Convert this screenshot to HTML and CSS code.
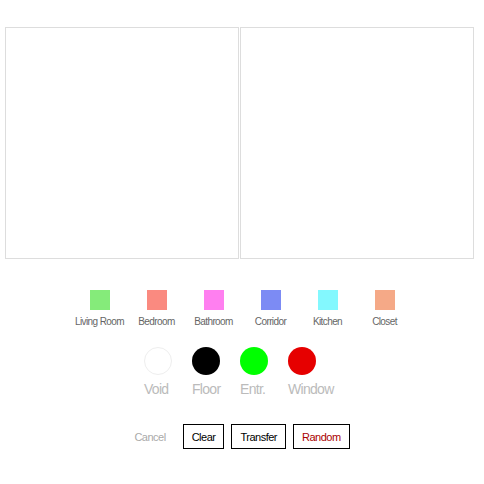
FILE: index.html
```html
<!DOCTYPE html>
<html>
<head>
    <title>Floor Plan Editor</title>
    <link rel="stylesheet" href="styles.css">
</head>
<body>
    <div class="canvases">
        <div class="canvas"></div>
        <div class="canvas"></div>
    </div>

    <div class="rooms">
        <div class="room"><span class="swatch living"></span><span class="room-label">Living Room</span></div>
        <div class="room"><span class="swatch bedroom"></span><span class="room-label">Bedroom</span></div>
        <div class="room"><span class="swatch bathroom"></span><span class="room-label">Bathroom</span></div>
        <div class="room"><span class="swatch corridor"></span><span class="room-label">Corridor</span></div>
        <div class="room"><span class="swatch kitchen"></span><span class="room-label">Kitchen</span></div>
        <div class="room"><span class="swatch closet"></span><span class="room-label">Closet</span></div>
    </div>

    <div class="tiles">
        <div class="tile"><span class="dot void"></span><span class="tile-label">Void</span></div>
        <div class="tile"><span class="dot floor"></span><span class="tile-label">Floor</span></div>
        <div class="tile"><span class="dot entrance"></span><span class="tile-label">Entr.</span></div>
        <div class="tile"><span class="dot window"></span><span class="tile-label">Window</span></div>
    </div>

    <div class="actions">
        <span class="cancel">Cancel</span>
        <button class="btn">Clear</button>
        <button class="btn">Transfer</button>
        <button class="btn random">Random</button>
    </div>
</body>
</html>
```

FILE: styles.css
```css
body {
    margin: 0;
    background-color: #fff;
    font-family: "Liberation Sans", sans-serif;
}
.canvases {
    display: flex;
    gap: 1px;
    padding: 27px 0 0 5px;
}
.canvas {
    width: 232px;
    height: 230px;
    border: 1px solid #ddd;
}
.rooms {
    display: flex;
    justify-content: center;
    margin-top: 31px;
}
.room {
    width: 57px;
    display: flex;
    flex-direction: column;
    align-items: center;
}
.swatch {
    width: 20px;
    height: 20px;
}
.room-label {
    margin-top: 6px;
    font-size: 10px;
    letter-spacing: -0.6px;
    color: #666;
    white-space: nowrap;
}
.living { background-color: #85eb7a; }
.bedroom { background-color: #fa8a80; }
.bathroom { background-color: #ff7ff0; }
.corridor { background-color: #7c8bf4; }
.kitchen { background-color: #83f8fe; }
.closet { background-color: #f5a987; }

.tiles {
    display: flex;
    justify-content: center;
    margin-top: 20px;
    padding-right: 4px;
}
.tile {
    width: 48px;
    display: flex;
    flex-direction: column;
    align-items: flex-start;
}
.dot {
    width: 28px;
    height: 28px;
    border-radius: 50%;
    box-sizing: border-box;
}
.tile-label {
    margin-top: 6px;
    font-size: 14px;
    letter-spacing: -0.7px;
    color: #bbb;
    white-space: nowrap;
}
.void { border: 1px solid #eee; }
.floor { background-color: #000; }
.entrance { background-color: #00ff00; }
.window { background-color: #e60000; }

.actions {
    display: flex;
    justify-content: center;
    align-items: center;
    gap: 7px;
    margin-top: 27px;
}
.cancel {
    font-size: 11px;
    letter-spacing: -0.5px;
    color: #aaa;
    margin-right: 10px;
}
.btn {
    font-family: inherit;
    font-size: 11px;
    letter-spacing: -0.5px;
    color: #000;
    background-color: #fff;
    border: 1px solid #000;
    height: 25px;
    padding: 0 8px;
    cursor: pointer;
}
.random {
    color: #a00;
}
```
